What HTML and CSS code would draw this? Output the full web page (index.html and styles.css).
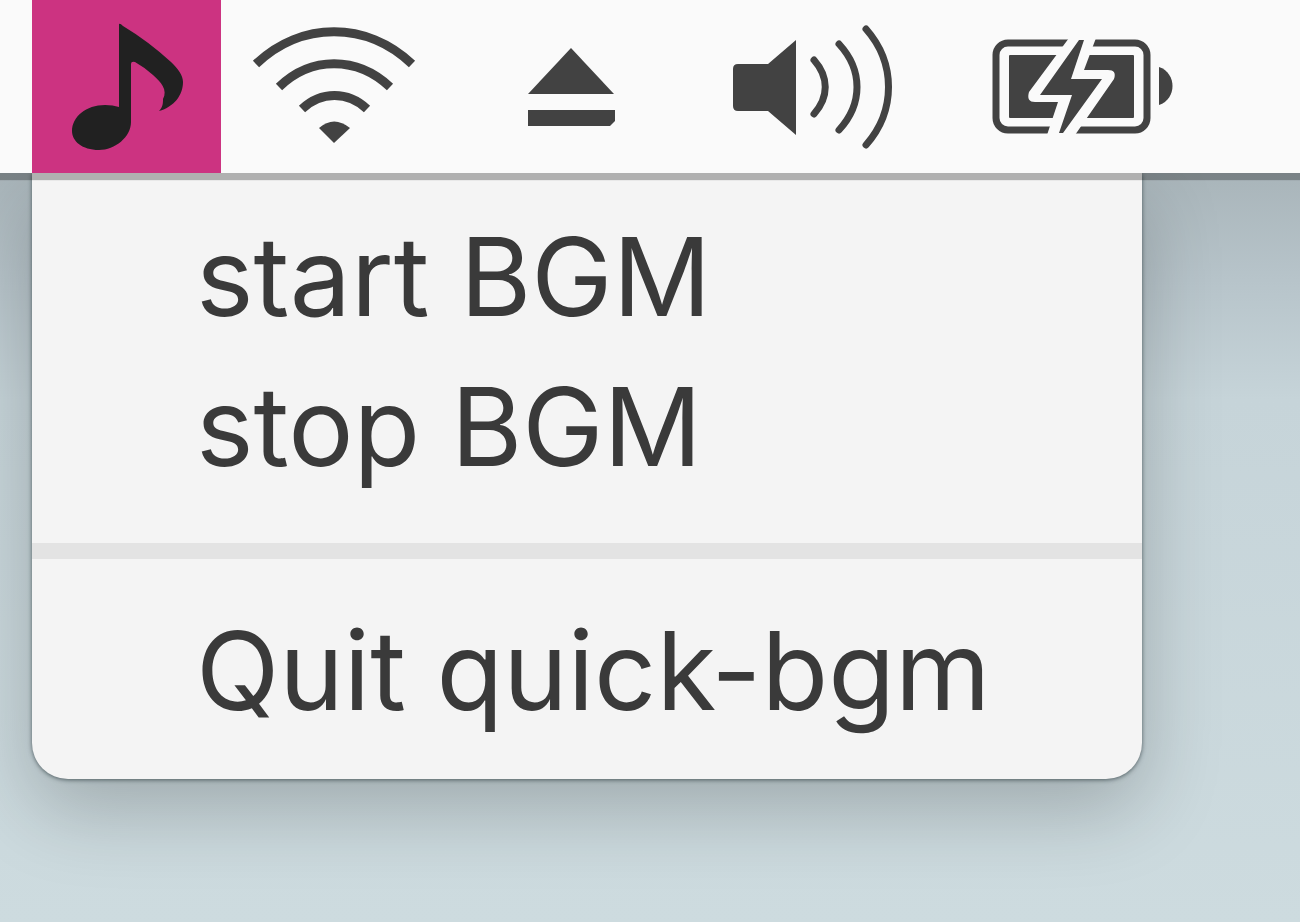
FILE: index.html
```
<!DOCTYPE html>
<html lang="en">
<head>
    <meta charset="UTF-8">
    <meta name="viewport" content="width=device-width, initial-scale=1.0">
    <title>quick-bgm</title>
    <link rel="stylesheet" href="styles.css">
</head>
<body>

    <header class="menubar">
        <button class="status note" aria-label="quick-bgm">
            <svg width="112" height="128" viewBox="70 23 112 128">
                <path d="M118 24Q119 23 122 26Q147 41 170 62C177 69 182 75 182 82C182 95 173 107 158 111C162 107 162 103 162 99C167 90 160 82 152 75Q143 67 134 62Q130 61 130 64V122C130 137 114 150 98 150C81 150 71 141 71 131C71 117 85 105 104 105Q112 105 118 107Z"/>
            </svg>
        </button>
        <button class="status wifi" aria-label="Wi-Fi">
            <svg width="166" height="122" viewBox="251 26 166 122">
                <g class="line thick">
                    <path d="M256 64C301 21 367 21 412 64"/>
                    <path d="M279 87C311 56 357 56 390 87"/>
                    <path d="M302 109C321 91 348 91 367 109"/>
                </g>
                <path d="M319 128Q334 115 350 128L334 143Z"/>
            </svg>
        </button>
        <button class="status eject" aria-label="Eject">
            <svg width="90" height="80" viewBox="526 47 90 80">
                <path d="M571 48L614 94H528Z"/>
                <path d="M528 110H615V121L610 126H528Z"/>
            </svg>
        </button>
        <button class="status volume" aria-label="Volume">
            <svg width="162" height="124" viewBox="731 24 162 124">
                <path d="M738 63H768L796 39V134L768 110H738Q733 110 733 105V68Q733 63 738 63Z"/>
                <g class="line">
                    <path d="M814 59C829 76 829 96 814 113"/>
                    <path d="M839 43C863 69 863 103 839 129"/>
                    <path d="M866 28C896 62 896 110 866 144"/>
                </g>
            </svg>
        </button>
        <button class="status battery" aria-label="Battery">
            <svg width="182" height="98" viewBox="992 38 182 98">
                <rect class="line frame" x="996" y="43" width="151" height="87" rx="12"/>
                <rect x="1009" y="55" width="125" height="63" rx="1"/>
                <path d="M1159 67C1177 73 1177 99 1159 105Z"/>
                <path class="gap" d="M1069 38L1029 92Q1026 102 1035 102H1058L1047 135H1075L1114 79Q1117 70 1108 70H1084L1096 38Z"/>
                <path d="M1079 40H1084L1071 79H1102L1063 133H1059L1072 95H1040Z"/>
            </svg>
        </button>
    </header>

    <nav class="menu">
        <button class="item">start BGM</button>
        <button class="item">stop BGM</button>
        <hr class="separator">
        <button class="item">Quit quick-bgm</button>
    </nav>

</body>
</html>
```
FILE: styles.css
```
* {
    box-sizing: border-box;
}

body {
    margin: 0;
    min-height: 100vh;
    font-family: Inter, sans-serif;
    color: #3a3a3a;
    background: linear-gradient(to bottom, #a9b5ba 174px, #b7c4ca 280px, #c6d4d9 400px, #cddbdf 100%);
    overflow: hidden;
}

button {
    border: 0;
    background: none;
    color: inherit;
    font: inherit;
}

/* Top bar with the status icons, its shadow falls on the menu too */
.menubar {
    position: relative;
    display: flex;
    height: 173px;
    padding-left: 32px;
    background: #fafafa;
    box-shadow: 0 7px 1px rgba(0, 0, 0, 0.28);
}

.status {
    display: flex;
    align-items: center;
    justify-content: center;
    flex-shrink: 0;
    padding: 0;
    fill: #424242;
}

.note {
    width: 189px;
    background: #cc3381;
    fill: #212121;
}

.wifi {
    width: 226px;
}

.eject {
    width: 248px;
}

.volume {
    width: 234px;
}

.battery {
    width: 308px;
}

.line {
    fill: none;
    stroke: #424242;
    stroke-width: 7px;
    stroke-linecap: round;
}

.thick {
    stroke-width: 9px;
    stroke-linecap: butt;
}

.frame {
    stroke-width: 7px;
}

.gap {
    fill: #fafafa;
}

/* Dropdown that hangs from the note icon */
.menu {
    max-width: 1110px;
    margin: 0 32px;
    padding: 28px 0 34px;
    border-radius: 0 0 36px 36px;
    background: #f4f4f4;
    box-shadow: 0 1px 4px rgba(40, 55, 60, 0.7), 0 30px 80px rgba(0, 0, 0, 0.22);
}

.item {
    display: block;
    width: 100%;
    padding: 0 0 0 164px;
    font-size: 109px;
    line-height: 150px;
    text-align: left;
    white-space: nowrap;
}

.separator {
    height: 16px;
    margin: 42px 0 36px;
    border: 0;
    background: #e3e3e3;
}
```
